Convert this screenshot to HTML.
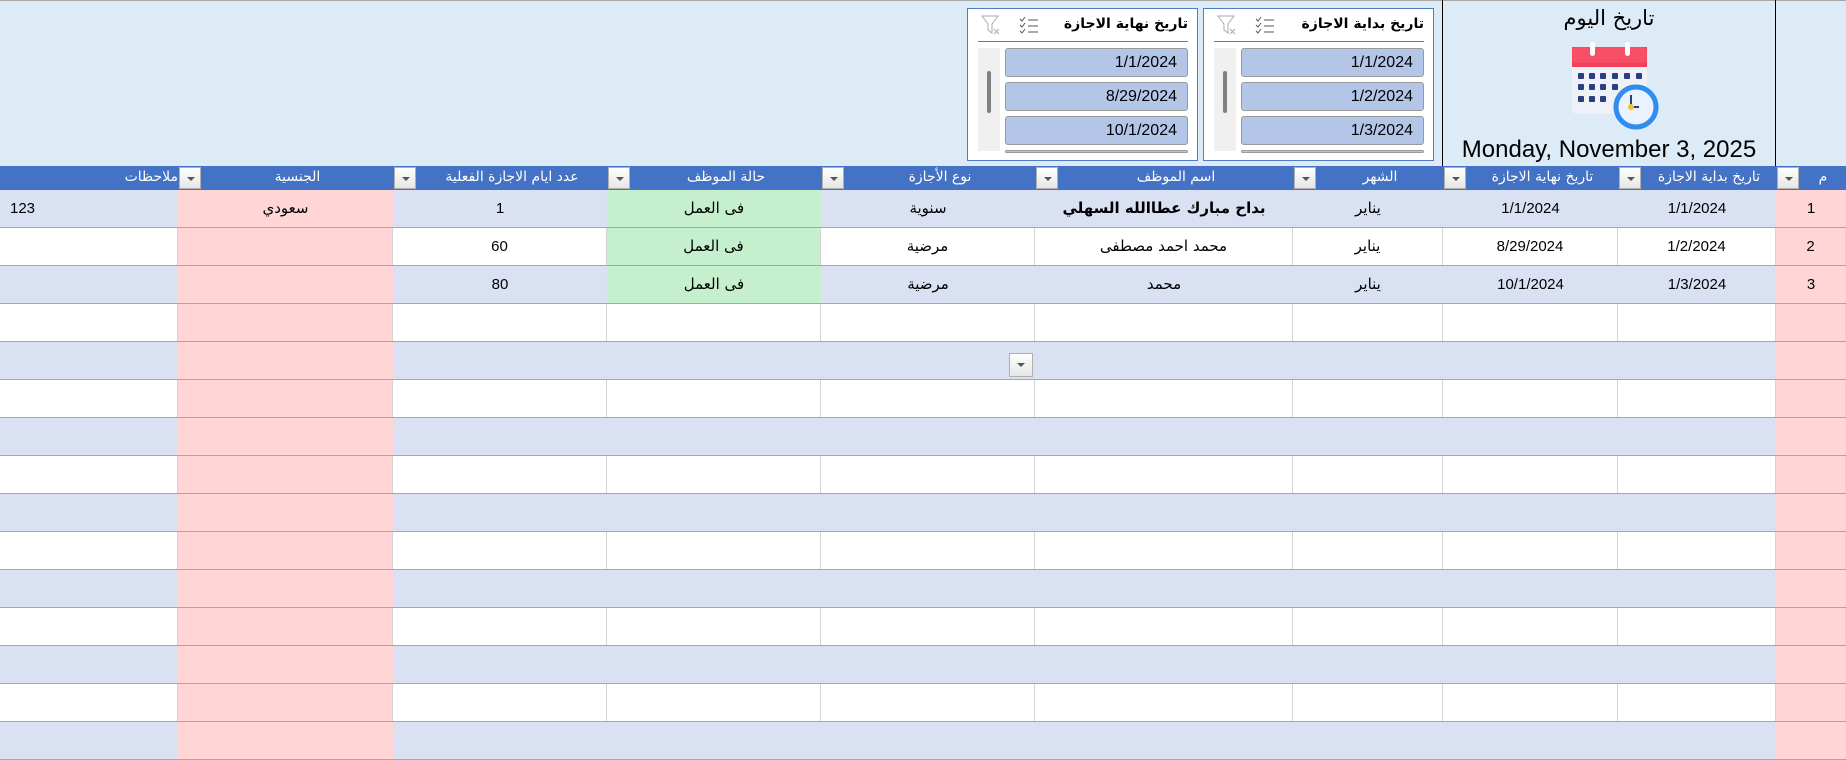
<!DOCTYPE html>
<html><head><meta charset="utf-8"><style>
*{margin:0;padding:0;box-sizing:border-box}
body{width:1846px;height:751px;overflow:hidden;background:#fff;position:relative;font-family:"DejaVu Sans","Liberation Sans",sans-serif}
.top{position:absolute;left:0;top:0;width:1846px;height:166px;background:#ddebf7;border-top:1px solid #a6a6a6}
.abs{position:absolute}
.r{position:absolute;left:0;width:1846px;height:38px;border-bottom:1px solid #8ea9db;display:flex}
.r div{height:37px;line-height:37px;text-align:center;font-size:15px;color:#000;flex:none}
.w div{border-right:1px solid #d4d4d4}
.b{background:#d9e1f2}
.p{background:#ffd5d5}
.g{background:#c6efce}
.n{font-family:"Liberation Sans",sans-serif;font-size:16px}
.c0{width:178px}.c1{width:215px}.c2{width:214px}.c3{width:214px}.c4{width:214px}.c5{width:258px}.c6{width:150px}.c7{width:175px}.c8{width:158px}.c9{width:70px}
.hd{position:absolute;left:0;top:166px;width:1846px;height:24px;background:#4472c4;display:flex}
.hd div{position:relative;height:24px;line-height:23px;color:#fff;font-size:14px;text-align:center;flex:none;padding-left:24px;white-space:nowrap;overflow:hidden}
.dd{position:absolute;width:22px;height:22px;background:linear-gradient(#fff,#e6e6e6);border:1px solid #b0b0b0}
.dd:after{content:"";position:absolute;left:7px;top:9px;border-left:4px solid transparent;border-right:4px solid transparent;border-top:4px solid #555}
.hd .dd{left:1px;top:1px;padding:0}
.sl{position:absolute;top:8px;width:231px;height:153px;background:#fff;border:1px solid #4f7bc8}
.st{position:absolute;right:9px;top:7px;font-size:14px;font-weight:bold}
.sep{position:absolute;left:10px;right:9px;top:32px;height:1px;background:#4f7bc8}
.it{position:absolute;left:37px;right:9px;height:29px;background:#b4c6e7;border:1px solid #9a9a9a;border-radius:3px;text-align:right;padding-right:10px;line-height:27px;font-family:"Liberation Sans",sans-serif;font-size:16px}
.tr{position:absolute;left:10px;top:39px;width:22px;height:103px;background:#f0f0f0}
.th{position:absolute;left:9px;top:23px;width:4px;height:42px;background:#808080;border-radius:2px}
</style></head><body>
<div class="top"></div>
<div class="abs" style="left:1442px;top:0;width:334px;height:166px;border-left:1px solid #000;border-right:1px solid #000"></div>
<div class="abs" style="left:1442px;top:6px;width:334px;text-align:center;font-size:21px">تاريخ اليوم</div>
<svg class="abs" style="left:1560px;top:35px" width="100" height="100" viewBox="0 0 100 100">
<rect x="12" y="12" width="75" height="67" rx="5" fill="#eef1f8"/>
<path d="M12 12h75v20H12z" fill="#f2405a"/><rect x="12" y="12" width="75" height="16" rx="5" fill="#f74f66"/>
<rect x="30" y="7" width="5" height="14" rx="2.5" fill="#fff"/><rect x="65" y="7" width="5" height="14" rx="2.5" fill="#fff"/>
<g fill="#2b3f7e">
<rect x="18" y="38" width="6" height="6" rx="1"/><rect x="29" y="38" width="6" height="6" rx="1"/><rect x="40" y="38" width="6" height="6" rx="1"/><rect x="52" y="38" width="6" height="6" rx="1"/><rect x="64" y="38" width="6" height="6" rx="1"/><rect x="76" y="38" width="6" height="6" rx="1"/>
<rect x="18" y="49" width="6" height="6" rx="1"/><rect x="29" y="49" width="6" height="6" rx="1"/><rect x="40" y="49" width="6" height="6" rx="1"/><rect x="52" y="49" width="6" height="6" rx="1"/>
<rect x="18" y="61" width="6" height="6" rx="1"/><rect x="29" y="61" width="6" height="6" rx="1"/><rect x="40" y="61" width="6" height="6" rx="1"/></g>
<circle cx="76" cy="72" r="20" fill="#eaf2ff" stroke="#2f8cf0" stroke-width="5"/>
<path d="M71 60v12h8" stroke="#2b3f7e" stroke-width="2" fill="none"/><circle cx="71" cy="72" r="3" fill="#f7c515"/>
</svg>
<div class="abs" style="left:1442px;top:136px;width:334px;text-align:center;font-family:'Liberation Sans',sans-serif;font-size:24px">Monday, November 3, 2025</div>

<div class="sl" style="left:1203px">
<div class="st">تاريخ بداية الاجازة</div>
<svg class="abs" style="left:50px;top:6px" width="22" height="20"><path d="M2 4l2 2 3-4M2 10l2 2 3-4M2 16l2 2 3-4" stroke="#555" fill="none"/><path d="M10 5h10M10 11h10M10 17h10" stroke="#555"/></svg>
<svg class="abs" style="left:12px;top:5px" width="22" height="22"><path d="M2 2h16l-6 8v9l-4-3v-6z" fill="none" stroke="#aaa"/><path d="M14 15l5 5M19 15l-5 5" stroke="#aaa"/></svg>
<div class="sep"></div>
<div class="tr"><div class="th"></div></div>
<div class="it" style="top:39px">1/1/2024</div>
<div class="it" style="top:73px">1/2/2024</div>
<div class="it" style="top:107px">1/3/2024</div>
<div class="it" style="top:141px;height:3px"></div>
</div>
<div class="sl" style="left:967px">
<div class="st">تاريخ نهاية الاجازة</div>
<svg class="abs" style="left:50px;top:6px" width="22" height="20"><path d="M2 4l2 2 3-4M2 10l2 2 3-4M2 16l2 2 3-4" stroke="#555" fill="none"/><path d="M10 5h10M10 11h10M10 17h10" stroke="#555"/></svg>
<svg class="abs" style="left:12px;top:5px" width="22" height="22"><path d="M2 2h16l-6 8v9l-4-3v-6z" fill="none" stroke="#aaa"/><path d="M14 15l5 5M19 15l-5 5" stroke="#aaa"/></svg>
<div class="sep"></div>
<div class="tr"><div class="th"></div></div>
<div class="it" style="top:39px">1/1/2024</div>
<div class="it" style="top:73px">8/29/2024</div>
<div class="it" style="top:107px">10/1/2024</div>
<div class="it" style="top:141px;height:3px"></div>
</div>

<div class="hd">
<div class="c0" style="padding-left:0"><span style="position:absolute;right:0">ملاحظات</span></div>
<div class="c1"><span class="dd"></span>الجنسية</div>
<div class="c2"><span class="dd"></span>عدد ايام الاجازة الفعلية</div>
<div class="c3"><span class="dd"></span>حالة الموظف</div>
<div class="c4"><span class="dd"></span>نوع الأجازة</div>
<div class="c5"><span class="dd"></span>اسم الموظف</div>
<div class="c6"><span class="dd"></span>الشهر</div>
<div class="c7"><span class="dd"></span>تاريخ نهاية الاجازة</div>
<div class="c8"><span class="dd"></span>تاريخ بداية الاجازة</div>
<div class="c9"><span class="dd"></span>م</div>
</div>

<div class="r b" style="top:190px"><div class="c0 n" style="text-align:left;padding-left:10px">123</div><div class="c1 p">سعودي</div><div class="c2 n">1</div><div class="c3 g">فى العمل</div><div class="c4">سنوية</div><div class="c5" style="font-weight:bold">بداح مبارك عطاالله السهلي</div><div class="c6">يناير</div><div class="c7 n">1/1/2024</div><div class="c8 n">1/1/2024</div><div class="c9 p n">1</div></div>
<div class="r w" style="top:228px"><div class="c0"></div><div class="c1 p"></div><div class="c2 n">60</div><div class="c3 g">فى العمل</div><div class="c4">مرضية</div><div class="c5">محمد احمد مصطفى</div><div class="c6">يناير</div><div class="c7 n">8/29/2024</div><div class="c8 n">1/2/2024</div><div class="c9 p n">2</div></div>
<div class="r b" style="top:266px"><div class="c0"></div><div class="c1 p"></div><div class="c2 n">80</div><div class="c3 g">فى العمل</div><div class="c4">مرضية</div><div class="c5">محمد</div><div class="c6">يناير</div><div class="c7 n">10/1/2024</div><div class="c8 n">1/3/2024</div><div class="c9 p n">3</div></div>

<div class="r w" style="top:304px"><div class="c0"></div><div class="c1 p"></div><div class="c2"></div><div class="c3"></div><div class="c4"></div><div class="c5"></div><div class="c6"></div><div class="c7"></div><div class="c8"></div><div class="c9 p"></div></div>
<div class="r b" style="top:342px"><div class="c0"></div><div class="c1 p"></div><div style="width:1383px"></div><div class="c9 p"></div></div>
<div class="r w" style="top:380px"><div class="c0"></div><div class="c1 p"></div><div class="c2"></div><div class="c3"></div><div class="c4"></div><div class="c5"></div><div class="c6"></div><div class="c7"></div><div class="c8"></div><div class="c9 p"></div></div>
<div class="r b" style="top:418px"><div class="c0"></div><div class="c1 p"></div><div style="width:1383px"></div><div class="c9 p"></div></div>
<div class="r w" style="top:456px"><div class="c0"></div><div class="c1 p"></div><div class="c2"></div><div class="c3"></div><div class="c4"></div><div class="c5"></div><div class="c6"></div><div class="c7"></div><div class="c8"></div><div class="c9 p"></div></div>
<div class="r b" style="top:494px"><div class="c0"></div><div class="c1 p"></div><div style="width:1383px"></div><div class="c9 p"></div></div>
<div class="r w" style="top:532px"><div class="c0"></div><div class="c1 p"></div><div class="c2"></div><div class="c3"></div><div class="c4"></div><div class="c5"></div><div class="c6"></div><div class="c7"></div><div class="c8"></div><div class="c9 p"></div></div>
<div class="r b" style="top:570px"><div class="c0"></div><div class="c1 p"></div><div style="width:1383px"></div><div class="c9 p"></div></div>
<div class="r w" style="top:608px"><div class="c0"></div><div class="c1 p"></div><div class="c2"></div><div class="c3"></div><div class="c4"></div><div class="c5"></div><div class="c6"></div><div class="c7"></div><div class="c8"></div><div class="c9 p"></div></div>
<div class="r b" style="top:646px"><div class="c0"></div><div class="c1 p"></div><div style="width:1383px"></div><div class="c9 p"></div></div>
<div class="r w" style="top:684px"><div class="c0"></div><div class="c1 p"></div><div class="c2"></div><div class="c3"></div><div class="c4"></div><div class="c5"></div><div class="c6"></div><div class="c7"></div><div class="c8"></div><div class="c9 p"></div></div>
<div class="r b" style="top:722px"><div class="c0"></div><div class="c1 p"></div><div style="width:1383px"></div><div class="c9 p"></div></div>
<span class="dd" style="left:1009px;top:353px;width:24px;height:24px"></span>
</body></html>
